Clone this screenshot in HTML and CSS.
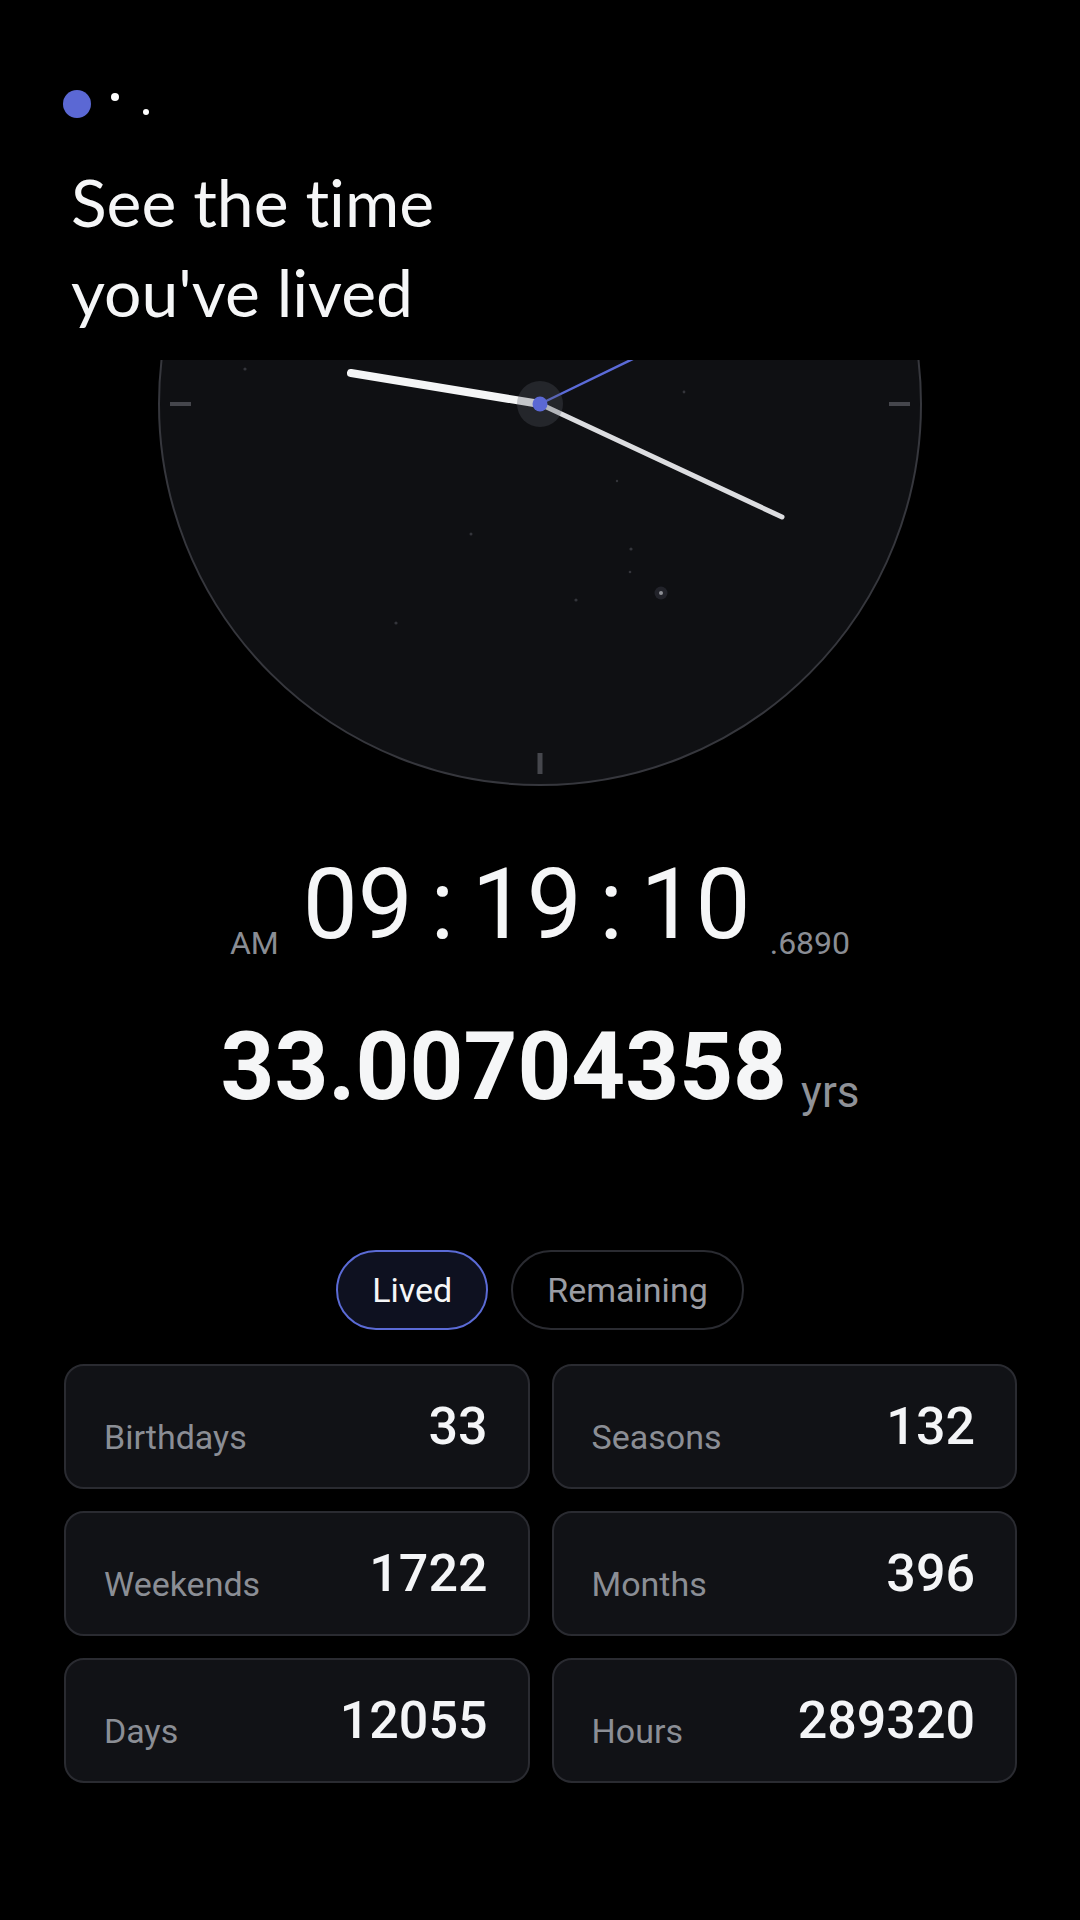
FILE: index.html
```html
<!DOCTYPE html>
<html lang="en">
<head>
<meta charset="utf-8">
<title>See the time you've lived</title>
<link rel="stylesheet" href="styles.css">
</head>
<body>
<div class="app">
  <header class="header">
    <svg class="logo" width="100" height="34" viewBox="0 0 100 34" aria-hidden="true">
      <circle cx="15" cy="16" r="14" fill="#5b68d4"/>
      <circle cx="53" cy="9" r="4" fill="#ffffff"/>
      <circle cx="84" cy="24" r="3" fill="#ffffff"/>
    </svg>
    <h1 class="title">See the time<br>you've lived</h1>
  </header>

  <svg class="clock" width="780" height="430" viewBox="-390 -44 780 430" aria-hidden="true">
    <circle cx="0" cy="0" r="381" fill="#0f1013" stroke="#36373d" stroke-width="2"/>
    <g fill="#45464c">
      <rect x="-370" y="-2" width="21" height="4"/>
      <rect x="349" y="-2" width="21" height="4"/>
      <rect x="-2.5" y="349" width="5" height="21"/>
    </g>
    <g fill="#34353b">
      <circle cx="-295" cy="-35" r="1.6"/>
      <circle cx="144" cy="-12" r="1.4"/>
      <circle cx="77" cy="77" r="1.2"/>
      <circle cx="-69" cy="130" r="1.5"/>
      <circle cx="91" cy="145" r="1.6"/>
      <circle cx="90" cy="168" r="1.3"/>
      <circle cx="36" cy="196" r="1.6"/>
      <circle cx="-144" cy="219" r="1.6"/>
    </g>
    <circle cx="121" cy="189" r="6.5" fill="#22232a"/>
    <circle cx="121" cy="189" r="2" fill="#8e9096"/>
    <line x1="0" y1="0" x2="-189" y2="-31" stroke="#f4f5f6" stroke-width="8" stroke-linecap="round"/>
    <line x1="0" y1="0" x2="242" y2="113" stroke="#dcdde0" stroke-width="5" stroke-linecap="round"/>
    <line x1="0" y1="0" x2="297" y2="-144" stroke="#5b6bd8" stroke-width="2.5" stroke-linecap="round"/>
    <circle cx="0" cy="0" r="23" fill="rgba(86,88,100,0.3)"/>
    <circle cx="0" cy="0" r="7.5" fill="#5b68d4"/>
  </svg>

  <div class="time-row">
    <span class="ampm">AM</span>
    <span class="time"><span>09</span><span class="colon">:</span><span>19</span><span class="colon">:</span><span>10</span></span>
    <span class="frac">.6890</span>
  </div>

  <div class="years-row">
    <span class="years">33.00704358</span>
    <span class="unit">yrs</span>
  </div>

  <div class="toggle">
    <button class="pill active">Lived</button>
    <button class="pill">Remaining</button>
  </div>

  <div class="stats">
    <div class="card"><span class="label">Birthdays</span><span class="value">33</span></div>
    <div class="card"><span class="label">Seasons</span><span class="value">132</span></div>
    <div class="card"><span class="label">Weekends</span><span class="value">1722</span></div>
    <div class="card"><span class="label">Months</span><span class="value">396</span></div>
    <div class="card"><span class="label">Days</span><span class="value">12055</span></div>
    <div class="card"><span class="label">Hours</span><span class="value">289320</span></div>
  </div>
</div>
</body>
</html>
```

FILE: styles.css
```css
* { box-sizing: border-box; }

html, body {
  margin: 0;
  padding: 0;
  background: #000;
}

body {
  width: 1080px;
  min-height: 1920px;
  font-family: Roboto, "Noto Sans", sans-serif;
  color: #f5f6f7;
}

.header {
  padding: 88px 0 0 62px;
  height: 360px;
}

.logo {
  display: block;
}

.title {
  margin: 35px 0 0 9px;
  font-family: Lato, "Noto Sans", sans-serif;
  font-weight: 400;
  font-size: 66px;
  line-height: 90px;
  font-variant-ligatures: none;
  font-feature-settings: "liga" 0, "dlig" 0;
  color: #f5f6f7;
}

.clock {
  display: block;
  margin: 0 auto;
}

.time-row {
  display: flex;
  justify-content: center;
  align-items: flex-end;
  margin-top: 58px;
}

.ampm, .frac {
  font-size: 32px;
  line-height: 1.172;
  color: #8a8d94;
}

.ampm {
  margin-right: 24px;
}

.frac {
  margin-left: 19px;
}

.time {
  display: flex;
  font-size: 98px;
  font-weight: 400;
  line-height: 1.172;
  color: #f5f6f7;
}

.colon {
  margin: 0 17.5px;
}

.years-row {
  display: flex;
  justify-content: center;
  align-items: flex-end;
  gap: 14px;
  margin-top: 49px;
}

.years {
  font-size: 94px;
  font-weight: 700;
  line-height: 1.172;
  color: #f5f6f7;
}

.unit {
  font-size: 44px;
  line-height: 1.172;
  color: #8f9298;
  margin-bottom: 3px;
}

.toggle {
  display: flex;
  justify-content: center;
  gap: 23px;
  margin-top: 128px;
}

.pill {
  font-family: Roboto, sans-serif;
  font-size: 34px;
  line-height: 40px;
  padding: 18px 34px;
  border-radius: 40px;
  border: 2px solid #2a2b31;
  background: #000;
  color: #9a9ca3;
}

.pill.active {
  border-color: #5b6bd6;
  background: #0e1120;
  color: #f5f6f7;
}

.stats {
  display: grid;
  grid-template-columns: 1fr 1fr;
  gap: 22px;
  margin: 34px 63px 0 64px;
}

.card {
  display: flex;
  justify-content: space-between;
  align-items: flex-end;
  padding: 31px 40px 29px 38px;
  border: 2px solid #2a2b31;
  border-radius: 20px;
  background: #111216;
}

.label {
  font-size: 34px;
  line-height: 1.172;
  color: #8b8e95;
}

.value {
  font-size: 52px;
  font-weight: 500;
  line-height: 1.172;
  color: #f4f5f7;
}
```
